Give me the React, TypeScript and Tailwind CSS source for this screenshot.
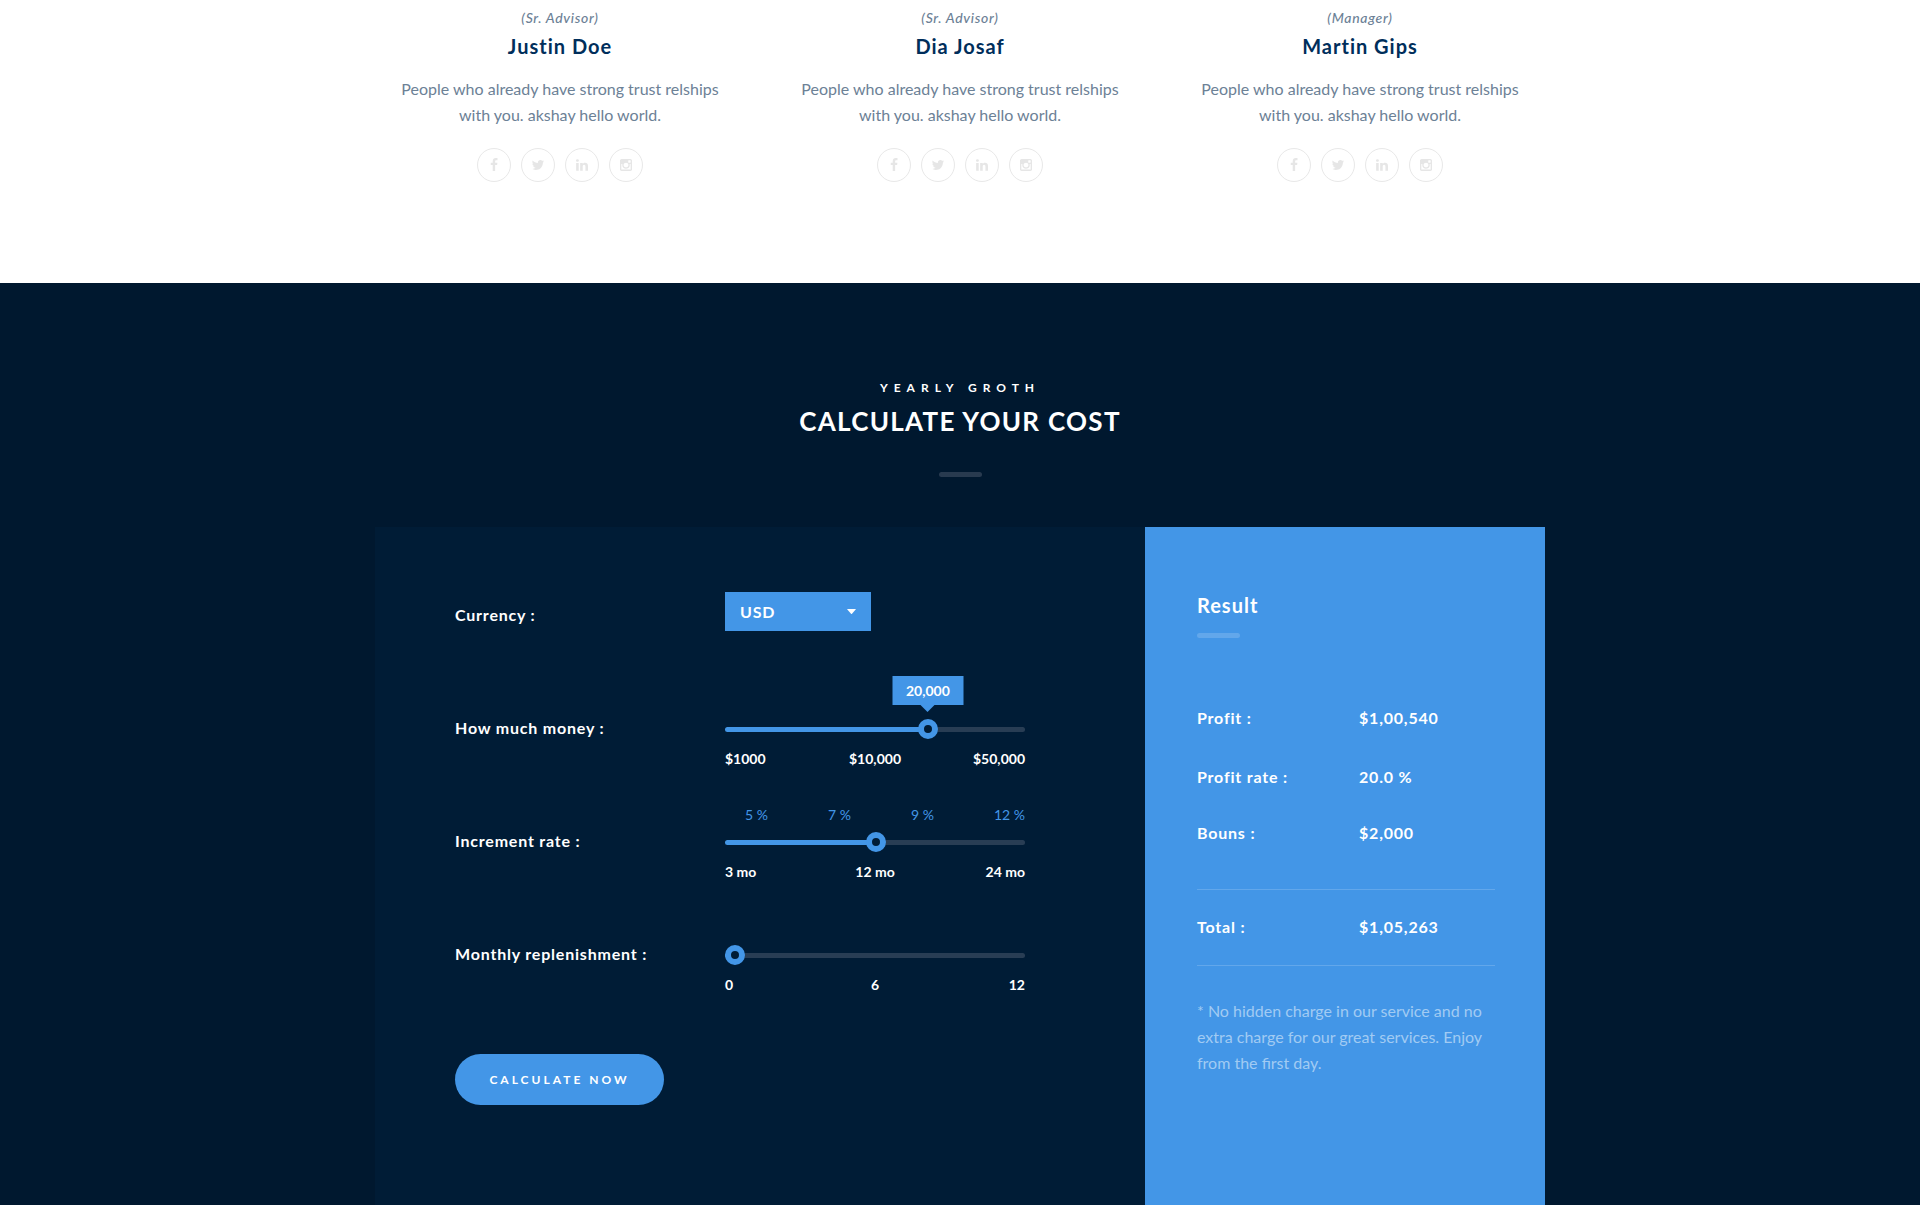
import { useId, useState } from "react";
import type { CSSProperties, ReactNode } from "react";

type Member = { name: string; role: string };

const members: Member[] = [
  { name: "Justin Doe", role: "(Sr. Advisor)" },
  { name: "Dia Josaf", role: "(Sr. Advisor)" },
  { name: "Martin Gips", role: "(Manager)" },
];

const socials = [
  {
    label: "Facebook",
    path: "M1343 12v264h-157q-86 0-116 36t-30 108v189h293l-39 296h-254v759h-306v-759h-255v-296h255v-218q0-186 104-288.5t277-102.5q147 0 228 12z",
  },
  {
    label: "Twitter",
    path: "M1684 408q-67 98-162 167 1 14 1 42 0 130-38 259.5t-115.5 248.5-184.5 210.5-258 146-323 54.5q-271 0-496-145 35 4 78 4 225 0 401-138-105-2-188-64.5t-114-159.5q33 5 61 5 43 0 85-11-112-23-185.5-111.5t-73.5-205.5v-4q68 38 146 41-66-44-105-115t-39-154q0-88 44-163 121 149 294.5 238.5t371.5 99.5q-8-38-8-74 0-134 94.5-228.5t228.5-94.5q140 0 236 102 109-21 205-78-37 115-142 178 93-10 186-50z",
  },
  {
    label: "LinkedIn",
    path: "M477 625v991h-330v-991h330zm21-306q1 73-50.5 122t-135.5 49h-2q-82 0-132-49t-50-122q0-74 51.5-122.5t134.5-48.5 133 48.5 51 122.5zm1166 729v568h-329v-530q0-105-40.5-164.5t-126.5-59.5q-63 0-105.5 34.5t-63.5 85.5q-11 30-11 81v553h-329q2-399 2-647t-1-296l-1-48h329v144h-2q20-32 41-56t56.5-52 87-43.5 114.5-15.5q171 0 275 113.5t104 332.5z",
  },
  {
    label: "Instagram",
    path: "M1490 1426v-648h-135q20 63 20 131 0 126-64 232.5t-174 168.5-240 62q-197 0-337-135.5t-140-327.5q0-68 20-131h-141v648q0 26 17.5 43.5t43.5 17.5h1069q25 0 43-17.5t18-43.5zm-284-533q0-124-90.5-211.5t-218.5-87.5q-127 0-217.5 87.5t-90.5 211.5 90.5 211.5 217.5 87.5q128 0 218.5-87.5t90.5-211.5zm284-360v-165q0-28-20-48.5t-49-20.5h-174q-29 0-49 20.5t-20 48.5v165q0 29 20 49t49 20h174q29 0 49-20t20-49zm174-208v1142q0 81-58 139t-139 58h-1142q-81 0-139-58t-58-139v-1142q0-81 58-139t139-58h1142q81 0 139 58t58 139z",
  },
];

function MemberCard({ name, role }: Member) {
  return (
    <article className="flex flex-col items-center px-4 text-center">
      <p className="text-sm leading-5 font-medium tracking-wider text-[#6c8196] italic">{role}</p>
      <h3 className="mt-1 text-xl leading-7 font-bold tracking-wider text-[#002e5b]">{name}</h3>
      <p className="mt-4 max-w-[330px] text-base leading-[26px] text-[#6c8196]">
        People who already have strong trust relships with you. akshay hello world.
      </p>
      <ul className="mt-5 flex gap-[10px]">
        {socials.map((s) => (
          <li key={s.label}>
            <a
              href="#"
              aria-label={`${name} on ${s.label}`}
              className="flex size-[34px] items-center justify-center rounded-full border border-[#e8e8e8] text-[#e6e6e6]"
            >
              <svg viewBox="0 0 1792 1792" className="size-[14px]" fill="currentColor" aria-hidden="true">
                <path d={s.path} />
              </svg>
            </a>
          </li>
        ))}
      </ul>
    </article>
  );
}

type RangeRowProps = {
  label: string;
  initial: number;
  marks: string[];
  rates?: string[];
  bubble?: string;
};

function RangeRow({ label, initial, marks, rates, bubble }: RangeRowProps) {
  const id = useId();
  const [value, setValue] = useState(initial);
  const ratio = value / 1000;
  const thumbCentre = `calc(10px + (100% - 20px) * ${ratio})`;

  return (
    <div className="grid grid-cols-[270px_300px]">
      <div className="col-start-2 flex h-[27px] items-start justify-between pl-5 text-sm leading-5 text-[#4396e7]">
        {rates?.map((r) => <span key={r}>{r}</span>)}
      </div>
      <label htmlFor={id} className="col-start-1 text-base leading-[18px] font-bold tracking-wider text-white">
        {label}
      </label>
      <div className="relative h-5">
        {bubble && (
          <output
            htmlFor={id}
            style={{ left: thumbCentre }}
            className="absolute bottom-[34px] flex h-[29px] w-[71px] -translate-x-1/2 items-center justify-center bg-[#4396e7] text-sm font-bold text-white after:absolute after:top-full after:border-x-[7px] after:border-t-[7px] after:border-x-transparent after:border-t-[#4396e7] after:content-['']"
          >
            {bubble}
          </output>
        )}
        <input
          id={id}
          type="range"
          min={0}
          max={1000}
          value={value}
          onChange={(e) => setValue(Number(e.target.value))}
          style={{ "--fill": thumbCentre } as CSSProperties}
          className="block h-5 w-full cursor-pointer appearance-none bg-transparent [&::-webkit-slider-runnable-track]:h-[5px] [&::-webkit-slider-runnable-track]:rounded-full [&::-webkit-slider-runnable-track]:bg-[linear-gradient(to_right,#4396e7_var(--fill),#283d54_var(--fill))] [&::-webkit-slider-thumb]:-mt-2 [&::-webkit-slider-thumb]:size-5 [&::-webkit-slider-thumb]:appearance-none [&::-webkit-slider-thumb]:rounded-full [&::-webkit-slider-thumb]:border-[6px] [&::-webkit-slider-thumb]:border-[#4396e7] [&::-webkit-slider-thumb]:bg-[#001c36]"
        />
      </div>
      <div className="col-start-2 mt-[10px] grid grid-cols-3 text-sm leading-5 font-bold text-white">
        <span>{marks[0]}</span>
        <span className="text-center">{marks[1]}</span>
        <span className="text-right">{marks[2]}</span>
      </div>
    </div>
  );
}

function ResultRow({ label, children }: { label: string; children: ReactNode }) {
  return (
    <div className="grid grid-cols-[162px_1fr] text-base leading-5 font-bold tracking-wider">
      <dt>{label}</dt>
      <dd>{children}</dd>
    </div>
  );
}

export default function App() {
  const [currency, setCurrency] = useState("USD");

  return (
    <main className="bg-white font-['Lato','Liberation_Sans',sans-serif]">
      <section className="mx-auto grid max-w-[1200px] grid-cols-3 pt-2 pb-[101px]">
        {members.map((m) => (
          <MemberCard key={m.name} {...m} />
        ))}
      </section>

      <section className="bg-[#00182f] pt-[95px]">
        <header className="flex flex-col items-center text-center text-white">
          <p className="text-xs leading-5 font-bold tracking-[6px]">YEARLY GROTH</p>
          <h2 className="mt-[5px] text-[26px] leading-9 font-bold tracking-wider">CALCULATE YOUR COST</h2>
          <span className="mt-[33px] h-[5px] w-[43px] rounded-full bg-[#283a4f]" />
        </header>

        <div className="mx-auto mt-[50px] grid max-w-[1170px] grid-cols-[1fr_400px]">
          <form className="bg-[#001c36] px-20 pt-[65px] pb-[100px]" onSubmit={(e) => e.preventDefault()}>
            <div className="grid grid-cols-[270px_300px] items-center">
              <label htmlFor="currency" className="pt-1.5 text-base leading-5 font-bold tracking-wider text-white">
                Currency :
              </label>
              <div className="relative w-[146px]">
                <select
                  id="currency"
                  value={currency}
                  onChange={(e) => setCurrency(e.target.value)}
                  className="block h-[39px] w-full cursor-pointer appearance-none bg-[#4396e7] px-[15px] text-base font-bold tracking-wider text-white"
                >
                  <option>USD</option>
                  <option>EUR</option>
                  <option>GBP</option>
                </select>
                <svg
                  viewBox="0 0 9 5"
                  className="pointer-events-none absolute top-[17px] right-[15px] h-[5px] w-[9px]"
                  fill="#ffffff"
                  aria-hidden="true"
                >
                  <path d="M.5 0h8q.5.1.2.6L5 4.700q-.5.500-1 0L.300.600Q0 .100.500 0z" />
                </svg>
              </div>
            </div>

            <div className="mt-[61px] flex flex-col gap-9">
              <RangeRow
                label="How much money :"
                initial={689}
                bubble="20,000"
                marks={["$1000", "$10,000", "$50,000"]}
              />
              <RangeRow
                label="Increment rate :"
                initial={504}
                rates={["5 %", "7 %", "9 %", "12 %"]}
                marks={["3 mo", "12 mo", "24 mo"]}
              />
              <RangeRow label="Monthly replenishment :" initial={0} marks={["0", "6", "12"]} />
            </div>

            <button
              type="submit"
              className="mt-[59px] h-[51px] w-[209px] cursor-pointer rounded-full bg-[#4396e7] text-xs font-bold tracking-[3px] text-white"
            >
              CALCULATE NOW
            </button>
          </form>

          <aside className="bg-[#4396e7] pt-16 pr-[50px] pl-[52px] text-white">
            <h3 className="text-xl leading-7 font-bold tracking-wider">Result</h3>
            <span className="mt-[14px] block h-[5px] w-[43px] rounded-full bg-[#62a7eb]" />
            <dl className="mt-[70px]">
              <ResultRow label="Profit :">$1,00,540</ResultRow>
              <div className="mt-[39px]">
                <ResultRow label="Profit rate :">20.0 %</ResultRow>
              </div>
              <div className="mt-9">
                <ResultRow label="Bouns :">$2,000</ResultRow>
              </div>
              <div className="mt-[46px] border-y border-[#62a7eb] pt-[27px] pb-7">
                <ResultRow label="Total :">$1,05,263</ResultRow>
              </div>
            </dl>
            <p className="mt-8 text-base leading-[26px] text-[#a1cbf3]">
              * No hidden charge in our service and no extra charge for our great services. Enjoy from the first day.
            </p>
          </aside>
        </div>
      </section>
    </main>
  );
}
